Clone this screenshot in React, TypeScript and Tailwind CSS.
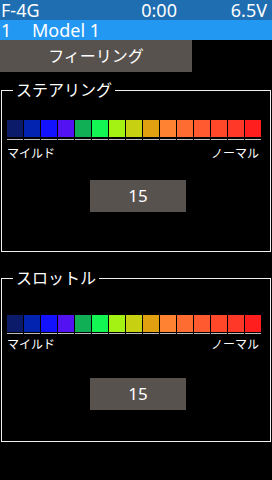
import React from "react";

const colors = [
  "#0c1a6a",
  "#0222b0",
  "#1212ff",
  "#5312f2",
  "#10ae55",
  "#12f552",
  "#a4f214",
  "#c8d012",
  "#e0a010",
  "#ff8232",
  "#ff6c32",
  "#ff5a30",
  "#ff482a",
  "#ff3828",
  "#ff1e1e",
];

const font = { fontFamily: '"Noto Sans", "Noto Sans CJK JP", sans-serif' };

function Bar({ lineGap, labelGap }: { lineGap: string; labelGap: string }) {
  return (
    <div className="pl-[5px]">
      <div className="flex gap-[1px]">
        {colors.map((c, i) => (
          <div key={i} className="w-[16px] h-[17px]" style={{ backgroundColor: c }} />
        ))}
      </div>
      <div className={`flex gap-[1px] ${lineGap}`}>
        {colors.map((_, i) => (
          <div key={i} className="w-[16px] h-[1px] bg-[#bdbdbd]" />
        ))}
      </div>
      <div className={`flex justify-between w-[254px] text-[12px] leading-[16px] text-white ${labelGap}`}>
        <span>マイルド</span>
        <span className="pr-[2px]">ノーマル</span>
      </div>
    </div>
  );
}

function Section({
  title,
  className,
  pt,
  lineGap,
  labelGap,
  boxGap,
  pb,
}: {
  title: string;
  className: string;
  pt: string;
  lineGap: string;
  labelGap: string;
  boxGap: string;
  pb: string;
}) {
  return (
    <div className={`relative ml-[1px] w-[270px] border border-[#f0f0f0] ${className} ${pt} ${pb}`}>
      <div className="absolute left-[11px] top-[-10px] bg-black px-[3px] text-[16px] leading-[18px] text-white">
        {title}
      </div>
      <Bar lineGap={lineGap} labelGap={labelGap} />
      <div className={`flex justify-center ${boxGap}`}>
        <div className="ml-[4px] w-[96px] h-[32px] bg-[#58524e] flex items-center justify-center text-white text-[17px]">
          15
        </div>
      </div>
    </div>
  );
}

export default function App() {
  return (
    <div className="w-[272px] h-[480px] bg-black overflow-hidden text-white" style={font}>
      <div className="h-[20px] bg-[#1e6eb1] flex items-center text-[18px] leading-[20px]">
        <span className="w-[142px] pl-[1px]">F-4G</span>
        <span className="w-[90px]">0:00</span>
        <span className="flex-1 text-right pr-[5px]">6.5V</span>
      </div>
      <div className="h-[20px] bg-[#2398f3] flex items-center text-[18px] leading-[20px]">
        <span className="w-[32px] pl-[1px]">1</span>
        <span>Model 1</span>
      </div>
      <div className="w-[192px] h-[32px] bg-[#58524e] flex items-center justify-center text-[16px]">
        フィーリング
      </div>
      <Section
        title="ステアリング"
        className="mt-[18px]"
        pt="pt-[29px]"
        lineGap="mt-[2px]"
        labelGap="mt-[6px]"
        boxGap="mt-[18px]"
        pb="pb-[39px]"
      />
      <Section
        title="スロットル"
        className="mt-[26px]"
        pt="pt-[36px]"
        lineGap="mt-[1px]"
        labelGap="mt-[3px]"
        boxGap="mt-[25px]"
        pb="pb-[31px]"
      />
    </div>
  );
}
